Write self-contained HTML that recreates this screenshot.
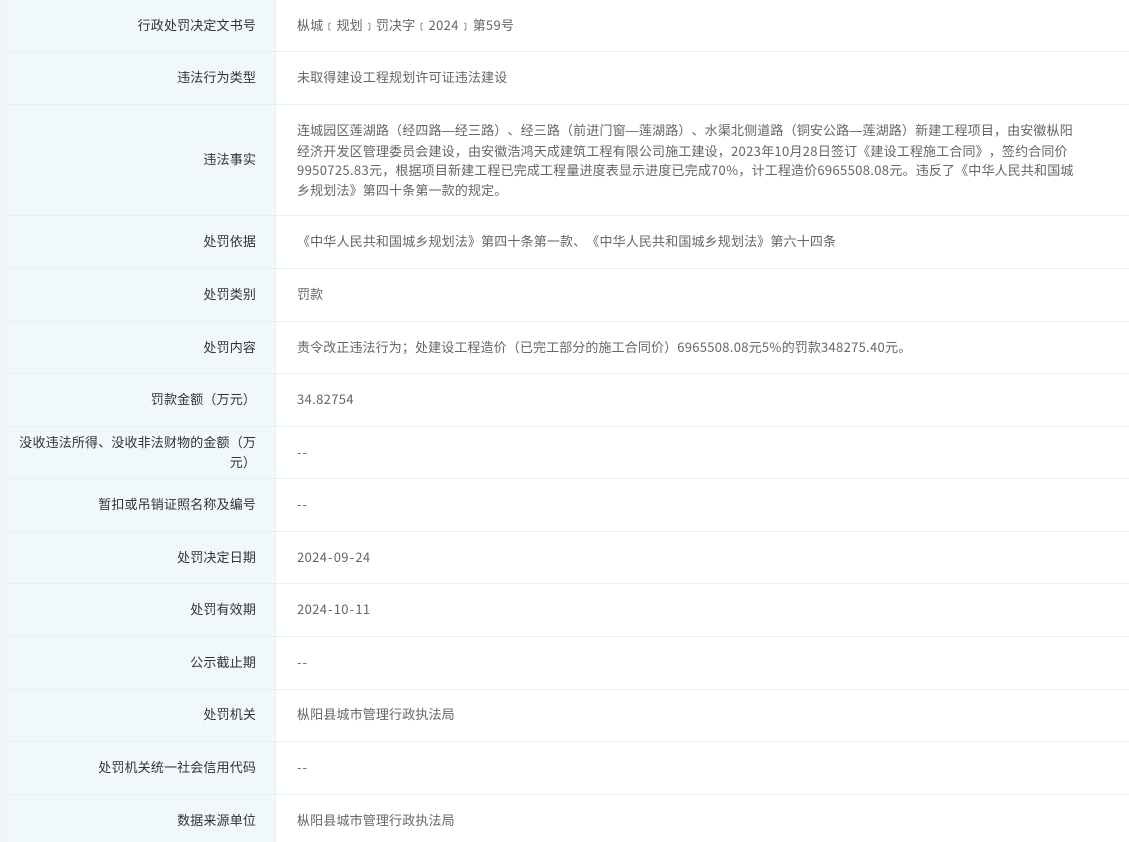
<!DOCTYPE html>
<html lang="zh">
<head>
<meta charset="utf-8">
<style>
html,body{margin:0;padding:0;width:1129px;height:842px;overflow:hidden;background:#fff;}
body{position:relative;font-family:"Noto Sans CJK SC",sans-serif;font-size:13px;letter-spacing:.15px;text-spacing-trim:space-all;font-kerning:none;}
#g{position:absolute;left:0;top:0;width:6px;height:842px;background:#f3f4f6;}
#c{position:absolute;left:6px;top:0;width:269px;height:842px;background:#f0f8fc;}
#d{position:absolute;left:275px;top:0;width:1px;height:842px;background:#e6eff5;}
.h{position:absolute;left:6px;width:1123px;height:1px;background:#e6eff5;}
.l{position:absolute;left:6px;width:250px;text-align:right;color:#333;line-height:20px;white-space:nowrap;}
.v{position:absolute;left:297px;color:#666;line-height:20px;white-space:nowrap;}
.n{letter-spacing:.35px;}
.m{padding:0 .8px;}
.e{letter-spacing:1px;}
.d{font-family:"Liberation Sans",sans-serif;letter-spacing:.15px;}
</style>
</head>
<body>
<div id="g"></div><div id="c"></div><div id="d"></div>
<div class="h" style="top:51px"></div>
<div class="h" style="top:104px"></div>
<div class="h" style="top:215px"></div>
<div class="h" style="top:268px"></div>
<div class="h" style="top:321px"></div>
<div class="h" style="top:373px"></div>
<div class="h" style="top:426px"></div>
<div class="h" style="top:478px"></div>
<div class="h" style="top:531px"></div>
<div class="h" style="top:583px"></div>
<div class="h" style="top:636px"></div>
<div class="h" style="top:689px"></div>
<div class="h" style="top:741px"></div>
<div class="h" style="top:794px"></div>

<div class="l" style="top:15px">行政处罚决定文书号</div>
<div class="v" style="top:15px">枞城﹝规划﹞罚决字﹝<span class="n">2024</span>﹞<span style="padding-left:.8px"></span>第<span class="n">59</span>号</div>
<div class="l" style="top:67px">违法行为类型</div>
<div class="v" style="top:67px">未取得建设工程规划许可证违法建设</div>
<div class="l" style="top:149px">违法事实</div>
<div class="v" style="top:120px;line-height:19.7px">连城园区莲湖路（经四路<span class="d">—</span>经三路）、经三路（前进门窗<span class="d">—</span>莲湖路）、水渠北侧道路（铜安公路<span class="d">—</span>莲湖路）新建工程项目，由安徽枞阳<br>经济开发区管理委员会建设，由安徽浩鸿天成建筑工程有限公司施工建设，<span class="n">2023</span>年<span class="n">10</span>月<span class="n">28</span>日签订《建设工程施工合同》，签约合同价<br><span class="n">9950725.83</span>元，根据项目新建工程已完成工程量进度表显示进度已完成<span class="n">70%</span>，计工程造价<span class="n">6965508.08</span>元。违反了《中华人民共和国城<br>乡规划法》第四十条第一款的规定。</div>
<div class="l" style="top:231px">处罚依据</div>
<div class="v" style="top:231px">《中华人民共和国城乡规划法》第四十条第一款、《中华人民共和国城乡规划法》第六十四条</div>
<div class="l" style="top:284px">处罚类别</div>
<div class="v" style="top:284px">罚款</div>
<div class="l" style="top:337px">处罚内容</div>
<div class="v" style="top:337px;letter-spacing:.11px">责令改正违法行为；处建设工程造价（已完工部分的施工合同价）<span class="n" style="letter-spacing:.3px">6965508.08</span>元<span class="n" style="letter-spacing:.3px">5%</span>的罚款<span class="n" style="letter-spacing:.3px">348275.40</span>元。</div>
<div class="l" style="top:389px">罚款金额（万元）</div>
<div class="v n" style="top:389px">34.82754</div>
<div class="l" style="top:432px;line-height:20px;white-space:normal">没收违法所得、没收非法财物的金额（万<br>元）</div>
<div class="v e" style="top:442px">--</div>
<div class="l" style="top:494px">暂扣或吊销证照名称及编号</div>
<div class="v e" style="top:494px">--</div>
<div class="l" style="top:547px">处罚决定日期</div>
<div class="v n" style="top:547px">2024<span class="m">-</span>09<span class="m">-</span>24</div>
<div class="l" style="top:599px">处罚有效期</div>
<div class="v n" style="top:599px">2024<span class="m">-</span>10<span class="m">-</span>11</div>
<div class="l" style="top:652px">公示截止期</div>
<div class="v e" style="top:652px">--</div>
<div class="l" style="top:704px">处罚机关</div>
<div class="v" style="top:704px">枞阳县城市管理行政执法局</div>
<div class="l" style="top:757px">处罚机关统一社会信用代码</div>
<div class="v e" style="top:757px">--</div>
<div class="l" style="top:810px">数据来源单位</div>
<div class="v" style="top:810px">枞阳县城市管理行政执法局</div>
</body>
</html>
